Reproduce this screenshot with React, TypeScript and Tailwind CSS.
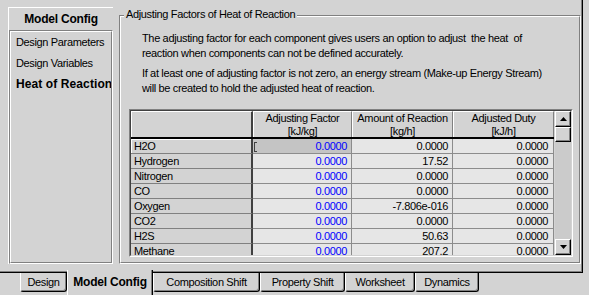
const rows = [
  ["H2O", "0.0000", "0.0000", "0.0000"],
  ["Hydrogen", "0.0000", "17.52", "0.0000"],
  ["Nitrogen", "0.0000", "0.0000", "0.0000"],
  ["CO", "0.0000", "0.0000", "0.0000"],
  ["Oxygen", "0.0000", "-7.806e-016", "0.0000"],
  ["CO2", "0.0000", "0.0000", "0.0000"],
  ["H2S", "0.0000", "50.63", "0.0000"],
  ["Methane", "0.0000", "207.2", "0.0000"],
];

const tabs = [
  { label: "Design", w: "w-[47px]" },
  { label: "Model Config", w: "w-[86px]", active: true },
  { label: "Composition Shift", w: "w-[107px]" },
  { label: "Property Shift", w: "w-[85px]" },
  { label: "Worksheet", w: "w-[70px]" },
  { label: "Dynamics", w: "w-[64px]" },
];

function Arrow({ down }: { down?: boolean }) {
  return (
    <svg width="7" height="4" viewBox="0 0 7 4">
      <polygon points={down ? "0,0 7,0 3.5,4" : "3.5,0 7,4 0,4"} fill="#000" />
    </svg>
  );
}

function ScrollButton({ down }: { down?: boolean }) {
  return (
    <div className="flex h-[16px] items-center justify-center border-b border-l border-r border-t border-b-black border-l-white border-r-black border-t-white bg-[#d3d3d3] shadow-[inset_-1px_-1px_0_#808080]">
      <Arrow down={down} />
    </div>
  );
}

export default function App() {
  return (
    <div className="h-[295px] w-[589px] overflow-hidden bg-[#d3d3d3] font-['Liberation_Sans',Arial,sans-serif] text-[11px] tracking-[-0.35px] text-black">
      <div className="h-[273px] w-[583px] border-b border-r border-black">
        <div className="flex h-full w-full border-b border-r border-[#808080] pl-[8px] pt-[7px]">
          {/* side nav */}
          <div className="flex h-[257px] w-[105px] flex-col border-l border-t border-white">
            <div className="flex h-[22px] items-center justify-center text-[12px] font-bold tracking-[-0.2px]">
              Model Config
            </div>
            <div className="flex-1 border border-b-white border-l-[#808080] border-r-white border-t-[#808080]">
              <div className="h-full overflow-hidden border border-b-[#808080] border-l-white border-r-[#808080] border-t-white pl-[5px]">
                <div className="whitespace-nowrap leading-[21px]">Design Parameters</div>
                <div className="whitespace-nowrap leading-[21px]">Design Variables</div>
                <div className="whitespace-nowrap text-[12px] font-bold leading-[21px] tracking-[0.1px]">Heat of Reaction</div>
              </div>
            </div>
          </div>

          {/* group box */}
          <div className="relative ml-[6px] mt-[8px] h-[249px] w-[462px] border border-b-white border-l-[#808080] border-r-white border-t-[#808080]">
            <div className="absolute -top-[8px] left-[4px] bg-[#d3d3d3] px-[2px] leading-[13px]">
              Adjusting Factors of Heat of Reaction
            </div>
            <div className="h-full border border-b-[#808080] border-l-white border-r-[#808080] border-t-white">
              <div className="pl-[21px] pt-[14px] leading-[15px]">
                <p>
                  The adjusting factor for each component gives users an option to adjust&nbsp; the heat&nbsp; of
                  <br />
                  reaction when components can not be defined accurately.
                </p>
                <p className="mt-[5px]">
                  If at least one of adjusting factor is not zero, an energy stream (Make-up Energy Stream)
                  <br />
                  will be created to hold the adjusted heat of reaction.
                </p>
              </div>

              {/* grid */}
              <div className="ml-[8px] mt-[13px] h-[148px] w-[444px] border border-b-white border-l-[#808080] border-r-white border-t-[#808080]">
                <div className="flex h-full border border-b-[#d3d3d3] border-l-[#404040] border-r-[#d3d3d3] border-t-[#404040]">
                  <div className="flex w-[423px] flex-col overflow-hidden">
                    <div className="flex h-[28px] shrink-0 border-b-2 border-black leading-[13px]">
                      <div className="w-[122px] border-l border-t border-white border-r-2 border-r-[#404040] bg-[#d3d3d3]" />
                      <div className="flex w-[99px] flex-col items-center border-l border-t border-white border-r border-r-[#808080]">
                        <span>Adjusting Factor</span>
                        <span>[kJ/kg]</span>
                      </div>
                      <div className="flex w-[101px] flex-col items-center border-l border-t border-white border-r border-r-[#808080]">
                        <span>Amount of Reaction</span>
                        <span>[kg/h]</span>
                      </div>
                      <div className="flex w-[101px] flex-col items-center border-l border-t border-white border-r border-r-[#808080]">
                        <span>Adjusted Duty</span>
                        <span>[kJ/h]</span>
                      </div>
                    </div>
                    {rows.map(([name, f, a, d], i) => (
                      <div key={name} className="flex h-[15px] shrink-0 leading-[14px]">
                        <div
                          className={`w-[122px] border-b border-r-2 border-b-[#808080] border-r-[#404040] bg-[#d3d3d3] pl-[3px] ${
                            i === 0 ? "shadow-[inset_1px_1px_0_#fff]" : ""
                          }`}
                        >
                          {name}
                        </div>
                        <div
                          className={`relative w-[99px] border-b border-r border-[#8c8c8c] pr-[4px] text-right text-[#0000ff] ${
                            i === 0 ? "bg-[#c4c4c4]" : "bg-[#e6e6e6]"
                          }`}
                        >
                          {i === 0 && (
                            <span className="absolute left-[1px] top-[3px] h-[10px] w-[3px] border-b border-l border-t border-[#404040]" />
                          )}
                          {f}
                        </div>
                        <div className="w-[101px] border-b border-r border-[#8c8c8c] bg-[#e6e6e6] pr-[4px] text-right">{a}</div>
                        <div className="w-[101px] border-b border-r border-[#8c8c8c] bg-[#e6e6e6] pr-[5px] text-right">{d}</div>
                      </div>
                    ))}
                  </div>
                  <div className="ml-px flex w-[16px] flex-col">
                    <ScrollButton />
                    <div className="h-[15px] border-b border-l border-r border-t border-b-black border-l-white border-r-black border-t-white bg-[#d3d3d3] shadow-[inset_-1px_-1px_0_#808080]" />
                    <div className="flex-1 bg-[#cbcbcb]" />
                    <ScrollButton down />
                  </div>
                </div>
              </div>
            </div>
          </div>
        </div>
      </div>

      {/* tabs */}
      <div className="flex pl-[20px]">
        {tabs.map((t) =>
          t.active ? (
            <div
              key={t.label}
              className={`relative z-10 -mt-[3px] flex h-[25px] items-center justify-center border-l border-r border-l-white border-r-black bg-[#d3d3d3] pb-[1px] text-[12px] font-bold tracking-[-0.2px] shadow-[inset_-1px_0_0_#808080] ${t.w}`}
            >
              {t.label}
            </div>
          ) : (
            <div
              key={t.label}
              className={`flex h-[19px] items-center justify-center rounded-b-[3px] border-b border-l border-r border-b-black border-l-white border-r-black shadow-[inset_-1px_-1px_0_#808080] ${t.w}`}
            >
              {t.label}
            </div>
          )
        )}
      </div>
    </div>
  );
}
